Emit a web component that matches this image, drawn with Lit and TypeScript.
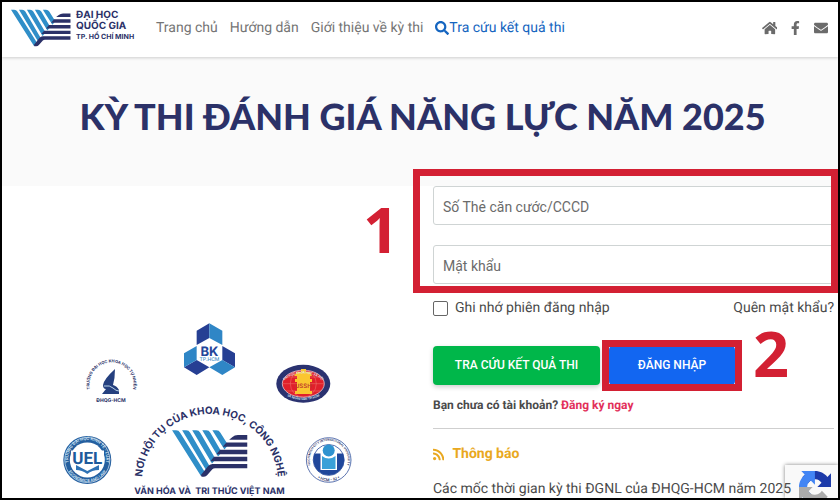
import { LitElement, html, svg, css } from "lit";
import { customElement } from "lit/decorators.js";

const ICONS = {
  search: ["0 0 512 512", "M505 442.7L405.3 343c-4.5-4.5-10.6-7-17-7H372c27.6-35.3 44-79.7 44-128C416 93.1 322.9 0 208 0S0 93.1 0 208s93.1 208 208 208c48.3 0 92.7-16.4 128-44v16.3c0 6.4 2.5 12.5 7 17l99.7 99.7c9.4 9.4 24.6 9.4 33.9 0l28.3-28.3c9.4-9.4 9.4-24.6.1-34zM208 336c-70.7 0-128-57.2-128-128 0-70.7 57.2-128 128-128 70.7 0 128 57.2 128 128 0 70.7-57.2 128-128 128z"],
  home: ["0 0 576 512", "M280.37 148.26L96 300.11V464a16 16 0 0 0 16 16l112.06-.29a16 16 0 0 0 15.92-16V368a16 16 0 0 1 16-16h64a16 16 0 0 1 16 16v95.64a16 16 0 0 0 16 16.05L464 480a16 16 0 0 0 16-16V300L295.67 148.26a12.19 12.19 0 0 0-15.3 0zM571.6 251.47L488 182.56V44.05a12 12 0 0 0-12-12h-56a12 12 0 0 0-12 12v72.61L318.47 43a48 48 0 0 0-61 0L4.34 251.47a12 12 0 0 0-1.6 16.9l25.5 31A12 12 0 0 0 45.15 301l235.22-193.74a12.19 12.19 0 0 1 15.3 0L530.9 301a12 12 0 0 0 16.9-1.6l25.5-31a12 12 0 0 0-1.7-16.93z"],
  facebook: ["0 0 320 512", "M279.14 288l14.22-92.66h-88.91v-60.13c0-25.35 12.42-50.06 52.24-50.06h40.42V6.26S260.43 0 225.36 0c-73.22 0-121.08 44.38-121.08 124.72v70.62H22.89V288h81.39v224h100.17V288z"],
  envelope: ["0 0 512 512", "M502.3 190.8c3.9-3.1 9.7-.2 9.7 4.7V400c0 26.5-21.5 48-48 48H48c-26.5 0-48-21.5-48-48V195.6c0-5 5.7-7.8 9.7-4.7 22.4 17.4 52.1 39.5 154.1 113.6 21.1 15.4 56.7 47.8 92.2 47.6 35.7.3 72-32.8 92.3-47.6 102-74.1 131.6-96.3 154-113.7zM256 320c23.2.4 56.6-29.2 73.4-41.4 132.7-96.3 142.8-104.7 173.4-128.7 5.8-4.5 9.2-11.5 9.2-18.9v-19c0-26.5-21.5-48-48-48H48c-26.5 0-48 21.5-48 48v19c0 7.4 3.4 14.3 9.2 18.9 30.6 23.9 40.7 32.4 173.4 128.7 16.8 12.2 50.2 41.8 73.4 41.4z"],
  rss: ["0 0 448 512", "M128.081 415.959c0 35.369-28.672 64.041-64.041 64.041S0 451.328 0 415.959s28.672-64.041 64.041-64.041 64.04 28.673 64.04 64.041zm175.66 47.25c-8.354-154.6-132.185-278.587-286.95-286.95C7.656 175.765 0 183.105 0 192.253v48.069c0 8.415 6.49 15.472 14.887 16.018 111.832 7.284 201.473 96.702 208.772 208.772.547 8.397 7.604 14.887 16.018 14.887h48.069c9.149.001 16.489-7.655 15.995-16.79zm144.249.288C439.596 229.677 251.465 40.445 16.503 32.01 7.473 31.686 0 38.981 0 48.016v48.068c0 8.625 6.835 15.645 15.453 15.999 191.179 7.839 344.627 161.316 352.465 352.465.353 8.618 7.373 15.453 15.999 15.453h48.068c9.034-.001 16.329-7.474 16.005-16.504z"],
} as const;

const icon = (name: keyof typeof ICONS) => html`
  <svg class="icon" viewBox=${ICONS[name][0]} aria-hidden="true"><path d=${ICONS[name][1]}></path></svg>`;

/* The university's V mark: five slanted stripes meeting five bars. */
const mark = svg`
  <g fill="#2f8ec8">
    <path d="M22 32H34Q42 32 46 39L120 157L108 168Z"/>
    <path d="M52 32H64Q72 32 76 39L134 139L124 152Z"/>
    <path d="M82 32H94Q102 32 106 39L152 118L141 131Z"/>
    <path d="M112 32H124Q132 32 136 39L170 97L159 110Z"/>
    <path d="M142 32H154Q162 32 166 39L189 76L178 89Z"/>
  </g>
  <g fill="#2b3168">
    <path d="M246 46H218Q208 46 202 52L192 60H246Z"/>
    <path d="M246 68H184L173 81H246Z"/>
    <path d="M246 90H165L154 103H246Z"/>
    <path d="M246 111H147L136 124H246Z"/>
    <path d="M246 132H142Q134 133 129 139L108 165L110 170H117Q123 170 127 165L142 148Q145 145 150 145H246Z"/>
  </g>`;

@customElement("exam-artwork")
class ExamArtwork extends LitElement {
  static styles = css`
    :host { display: block; }
    .art { display: block; width: 100%; height: auto; }
    text { font-family: Inter, "Liberation Sans", sans-serif; font-weight: 700; fill: #2b3168; }
    .motto { font-family: Inter, sans-serif; font-size: 10px; }
    .base { font-size: 9px; }
    .bk { font-size: 13px; fill: #24459a; }
    .bk-sub { font-size: 5px; fill: #3f8fc9; font-weight: 500; }
    .seal { font-size: 5px; }
    .seal-arc { font-size: 4px; }
    .uel { font-family: Roboto, sans-serif; font-size: 17px; fill: #1d5a9c; }
    .ring { font-size: 4px; font-weight: 600; }
    .fine { font-size: 3px; font-weight: 600; }
    .light { fill: #dcecf8; }
    .ussh { font-size: 6px; fill: #c0392b; }
  `;
  render() {
    return html`
      <svg class="art" viewBox="2 186 431 312" role="img" aria-label="Các trường thành viên ĐHQG-HCM">
        <defs>
          <path id="motto" d="M142 482A68 68 0 1 1 278 482"></path>
          <path id="khtn" d="M96 400A22 22 0 1 1 127 400"></path>
          <path id="uelTop" d="M69 464A19 19 0 1 1 105.6 464"></path>
          <path id="uelBottom" d="M65.5 463A22 22 0 0 0 109.1 463"></path>
          <path id="iuTop" d="M315 473A19 19 0 1 1 342.400 473"></path>
          <path id="iuBottom" d="M312 473A21 21 0 0 0 345.4 473"></path>
          <path id="usTop" d="M281 386A22.5 14.5 0 0 1 325.6 386"></path>
          <path id="usBottom" d="M279 387A25 17 0 0 0 327.6 387"></path>
        </defs>

        <g transform="translate(180 310) scale(.3333)">
          <path fill="#263f93" d="M88 40L50 62V105L88 84ZM12 172L50 150L88 172L50 195ZM127 108L165 130V172L127 150Z"/>
          <path fill="#2f86c6" d="M88 40L127 62V105L88 84ZM12 130L50 108V150L12 172ZM88 172L127 150L165 172L127 195Z"/>
        </g>
        <text class="bk" x="209.5" y="356" text-anchor="middle">BK</text>
        <text class="bk-sub" x="209.5" y="361" text-anchor="middle">TP.HCM</text>

        <text class="seal-arc"><textPath href="#khtn" startOffset="50%" text-anchor="middle">TRƯỜNG ĐẠI HỌC KHOA HỌC TỰ NHIÊN</textPath></text>
        <path fill="#25407f" d="M115 369Q104 379 103 385Q103 389 106 389L102 394H119V390Q117 386 113 385Q115 378 115 369Z"/>
        <path fill="none" stroke="#b9d3ea" d="M104 386Q110 385 113 388T119 391"/>
        <text class="seal" x="111" y="402" text-anchor="middle">ĐHQG-HCM</text>

        <circle cx="87.3" cy="460" r="24" fill="#245f9f"/>
        <circle cx="87.3" cy="460" r="22.5" fill="none" stroke="#d9e8f5" stroke-width=".7"/>
        <circle cx="87.3" cy="460" r="17.5" fill="#fff"/>
        <path fill="#2f72b4" d="M76 465L87.3 471L99 465V470Q92 470 87.3 474Q82 470 76 470Z"/>
        <rect x="71" y="450.5" width="33" height="14" fill="#fff"/>
        <text class="uel" x="87.3" y="463.5" text-anchor="middle">UEL</text>
        <text class="ring light"><textPath href="#uelTop" startOffset="50%" text-anchor="middle">TRƯỜNG ĐẠI HỌC KINH TẾ - LUẬT</textPath></text>
        <text class="ring light"><textPath href="#uelBottom" startOffset="50%" text-anchor="middle">ECONOMICS AND LAW</textPath></text>

        <ellipse cx="303.3" cy="383.7" rx="27" ry="19" fill="#2a3270"/>
        <ellipse cx="303.3" cy="383.7" rx="21" ry="13.5" fill="#e0202b" stroke="#e9c9d0" stroke-width=".8"/>
        <g fill="none" stroke="#f07b70" stroke-width=".5">
          <ellipse cx="303.3" cy="383.7" rx="13" ry="13.5"/>
          <path d="M282.500 383.700H324M286 377H321M286 391H321"/>
        </g>
        <path fill="#fbc62f" d="M301 369H306V372H310L312 376H310V379H312V382H310V391H312V394H295V391H297V382H295V379H297V376H294L297 372H301Z"/>
        <text class="fine ussh" x="303.3" y="388" text-anchor="middle">USSH</text>
        <text class="fine light"><textPath href="#usTop" startOffset="50%" text-anchor="middle">ĐẠI HỌC KHOA HỌC XÃ HỘI</textPath></text>
        <text class="fine light"><textPath href="#usBottom" startOffset="50%" text-anchor="middle">VÀ NHÂN VĂN TP.HCM</textPath></text>

        <circle cx="328.700" cy="460" r="22.300" fill="#fff" stroke="#35529c" stroke-width=".8"/>
        <circle cx="328.700" cy="460" r="15.500" fill="#fff" stroke="#2a4a9c" stroke-width=".8"/>
        <path fill="#20479b" d="M314.500 453.500H343A15.500 15.500 0 1 1 314.500 453.500Z"/>
        <path fill="#fff" d="M320.500 453V470H337V453Z"/>
        <circle cx="328.700" cy="450.500" r="6" fill="#2f93d0"/>
        <path fill="#3aa0d8" d="M322 456Q328.700 461 335.500 456V469H322Z"/>
        <text class="fine"><textPath href="#iuTop" startOffset="50%" text-anchor="middle">HOCHIMINH CITY INTERNATIONAL UNIVERSITY</textPath></text>
        <text class="ring"><textPath href="#iuBottom" startOffset="50%" text-anchor="middle">• HCM - IU •</textPath></text>

        <text class="motto"><textPath href="#motto" startOffset="50%" text-anchor="middle">NƠI HỘI TỤ CỦA KHOA HỌC, CÔNG NGHỆ</textPath></text>
        <svg x="172" y="430" width="76" height="47" viewBox="22 31 226 140">${mark}</svg>
        <text class="base" x="209.500" y="494" text-anchor="middle">VĂN HÓA VÀ&#160; TRI THỨC VIỆT NAM</text>
      </svg>`;
  }
}

@customElement("app-root")
class AppRoot extends LitElement {
  static styles = css`
    :host {
      display: block;
      font: 14px/20px Roboto, "Liberation Sans", sans-serif;
      color: #4a4a4a;
      text-rendering: geometricPrecision;
    }
    * { box-sizing: border-box; }
    a { color: inherit; text-decoration: none; }
    .icon { height: 14px; fill: currentColor; flex: none; }
    .shell {
      position: relative;
      height: 100vh;
      overflow: hidden;
      border: 2px solid #000;
      background: #fff;
    }
    header {
      display: flex;
      align-items: center;
      height: 55px;
      padding: 0 10px 4px 9px;
      color: #757575;
      position: relative;
      background: #fff;
      box-shadow: 0 1px 3px #0000002e;
    }
    .brand { display: flex; gap: 5px; width: 145px; color: #2b3168; }
    .brand svg { width: 60px; height: 38px; }
    .brand-text { display: flex; flex-direction: column; padding-top: 1px; font: 700 10px/11px Inter, sans-serif; white-space: nowrap; }
    .brand-text small { font-size: 7px; line-height: 9px; }
    nav { display: flex; gap: 12px; white-space: nowrap; }
    nav .active { display: flex; align-items: center; color: #1565c0; }
    .social { display: flex; gap: 14px; margin-left: auto; color: #6b6b6b; }
    .social a { display: flex; }
    .hero { display: flex; justify-content: center; background: #fafafa; height: 129px; padding: 33px 0 0 5px; }
    h1 { margin: 0; font: 900 36px/52px Lato, sans-serif; color: #2b3168; white-space: nowrap; }
    main { display: grid; grid-template-columns: minmax(0, 1fr) minmax(0, 401px); padding-right: 4px; }
    form { display: flex; flex-direction: column; }
    .fields { position: relative; display: flex; flex-direction: column; gap: 20px; }
    .text {
      width: 100%; height: 39px; padding: 3px 9px 0; border: 1px solid #cfd4d4; border-radius: 3px;
      font: inherit; color: inherit; background: #fff;
    }
    .text::placeholder { color: #6b6b6b; opacity: 1; }
    .frame { position: absolute; border: 7px solid #d32033; pointer-events: none; }
    .frame-fields { inset: -17px -4px -9px -20px; }
    .step { position: absolute; font: 700 63px/63px "Open Sans", sans-serif; color: #d32033; }
    .step-one { top: 12px; left: -70px; }
    .step-two { top: -24px; left: 144px; }
    .options { display: flex; justify-content: space-between; align-items: center; margin-top: 14px; white-space: nowrap; }
    .options label { display: flex; align-items: center; gap: 7px; }
    .options input { appearance: none; width: 15px; height: 15px; margin: 0; border: 1px solid #666; border-radius: 2px; }
    .actions { display: flex; gap: 9px; margin-top: 28px; }
    .slot { position: relative; }
    .frame-login { inset: -6px -7px -6px -7px; }
    button {
      height: 39px; border: 0; border-radius: 4px; color: #fff; white-space: nowrap;
      font: 500 12px/39px Roboto, sans-serif; padding: 0;
    }
    .lookup { width: 167px; background: #00b74a; box-shadow: 0 2px 5px #0003; }
    .login { width: 126px; background: #1266f1; }
    .signup { margin: 10px 0 0; font-weight: 700; font-size: 12px; }
    .signup a { color: #e2305a; }
    hr { width: 100%; margin: 13px 0 0; border: 0; border-top: 1px solid #cfcfcf; }
    h2 { display: flex; align-items: center; gap: 8px; margin: 15px 0 0; font: 700 14px/20px Roboto, sans-serif; color: #e9a820; }
    h2 .icon { height: 13px; }
    .news { position: relative; z-index: 1; margin: 15px 0 0; white-space: nowrap; }
    .captcha {
      position: absolute; right: 0; bottom: 0; width: 53px; height: 33px; padding: 6px 0 0 14px;
      overflow: hidden; background: #f9f9f9; box-shadow: 0 0 4px #808080;
    }
    .captcha svg { display: block; width: 32px; height: 32px; }
  `;
  render() {
    return html`
      <div class="shell">
        <header>
          <a class="brand" href="#">
            <svg viewBox="22 31 226 140" aria-hidden="true">${mark}</svg>
            <span class="brand-text"><span>ĐẠI HỌC</span><span>QUỐC GIA</span><small>TP. HỒ CHÍ MINH</small></span>
          </a>
          <nav>
            <a href="#">Trang chủ</a>
            <a href="#">Hướng dẫn</a>
            <a href="#">Giới thiệu về kỳ thi</a>
            <a class="active" href="#">${icon("search")}Tra cứu kết quả thi</a>
          </nav>
          <div class="social">
            <a href="#" aria-label="Trang chủ">${icon("home")}</a>
            <a href="#" aria-label="Facebook">${icon("facebook")}</a>
            <a href="#" aria-label="Email">${icon("envelope")}</a>
          </div>
        </header>
        <section class="hero"><h1>KỲ THI ĐÁNH GIÁ NĂNG LỰC NĂM 2025</h1></section>
        <main>
          <exam-artwork></exam-artwork>
          <form @submit=${(e: Event) => e.preventDefault()}>
            <div class="fields">
              <input class="text" type="text" placeholder="Số Thẻ căn cước/CCCD" aria-label="Số Thẻ căn cước/CCCD">
              <input class="text" type="password" placeholder="Mật khẩu" aria-label="Mật khẩu">
              <div class="frame frame-fields"></div>
              <span class="step step-one">1</span>
            </div>
            <div class="options">
              <label><input type="checkbox">Ghi nhớ phiên đăng nhập</label>
              <a href="#">Quên mật khẩu?</a>
            </div>
            <div class="actions">
              <button class="lookup" type="button">TRA CỨU KẾT QUẢ THI</button>
              <div class="slot">
                <button class="login" type="submit">ĐĂNG NHẬP</button>
                <div class="frame frame-login"></div>
                <span class="step step-two">2</span>
              </div>
            </div>
            <p class="signup">Bạn chưa có tài khoản? <a href="#">Đăng ký ngay</a></p>
            <hr>
            <h2>${icon("rss")}Thông báo</h2>
            <p class="news">Các mốc thời gian kỳ thi ĐGNL của ĐHQG-HCM năm 2025</p>
          </form>
        </main>
        <div class="captcha">
          <svg viewBox="0 0 64 64" role="img" aria-label="reCAPTCHA">
            <path fill="#1c3aa9" d="M64 31.955l-.033-1.370V4.687l-7.160 7.160C50.948 4.674 42.033.093 32.050.093c-10.400 0-19.622 4.960-25.458 12.640l11.736 11.860a15.550 15.550 0 0 1 4.754-5.334c2.050-1.600 4.952-2.906 8.968-2.906.485 0 .860.057 1.135.163 4.976.393 9.288 3.140 11.828 7.124l-8.307 8.307L64 31.953"/>
            <path fill="#4285f4" d="M31.862.094l-1.370.033H4.594l7.160 7.160C4.580 13.147 0 22.060 0 32.046c0 10.400 4.960 19.622 12.640 25.458L24.500 45.768a15.550 15.550 0 0 1-5.334-4.754c-1.600-2.050-2.906-4.952-2.906-8.968 0-.485.057-.860.163-1.135.393-4.976 3.140-9.288 7.124-11.828l8.307 8.307L31.860.095"/>
            <path fill="#ababab" d="M.001 32.045l.033 1.370v25.898l7.160-7.160c5.860 7.173 14.774 11.754 24.760 11.754 10.400 0 19.622-4.960 25.458-12.640l-11.736-11.860a15.550 15.550 0 0 1-4.754 5.334c-2.050 1.600-4.952 2.906-8.968 2.906-.485 0-.860-.057-1.135-.163-4.976-.393-9.288-3.140-11.828-7.124l8.307-8.307c-10.522.040-22.400.066-27.295-.005"/>
          </svg>
        </div>
      </div>`;
  }
}
